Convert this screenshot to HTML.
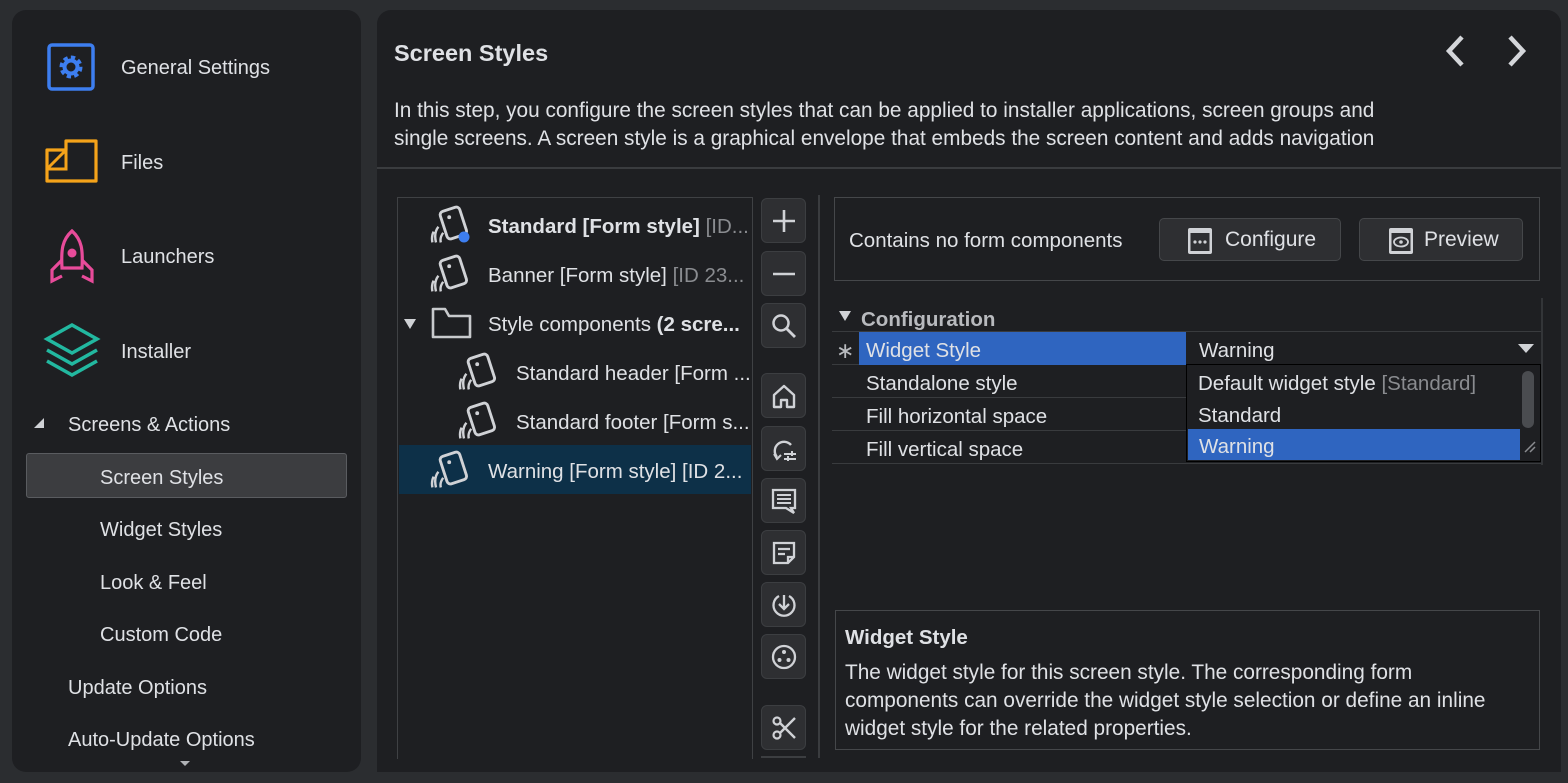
<!DOCTYPE html>
<html><head><meta charset="utf-8"><style>
*{box-sizing:border-box;margin:0;padding:0}
body{width:1568px;height:783px;background:#2b2d30;font-family:"Liberation Sans",sans-serif;color:#dfe1e5;position:relative;overflow:hidden}
.a{position:absolute;white-space:nowrap}
.side{left:12px;top:10px;width:349px;height:762px;background:#1e1f22;border-radius:14px}
.main{left:377px;top:10px;width:1184px;height:762px;background:#1e1f22;border-radius:14px 14px 0 0}
.t20{font-size:20px}
.t19{font-size:20.5px}
.btn{position:absolute;left:761px;width:45px;height:45px;background:#2e2f32;border:1px solid #3c3e41;border-radius:6px}
.btn svg{position:absolute;left:7px;top:7px}
.row{position:absolute;left:832px;width:709px;height:33px;border-bottom:1px solid #393b3e}
.gray{color:#8a8c90}
</style></head><body>
<div class="a side"></div>
<div class="a main"></div>

<svg class="a" style="left:46px;top:42px" width="50" height="50" viewBox="0 0 50 50"><rect x="3" y="3" width="44" height="44" rx="3" fill="none" stroke="#3d7ef0" stroke-width="3.5"/><circle cx="25" cy="25" r="9" fill="none" stroke="#3d7ef0" stroke-width="5" stroke-dasharray="4 3"/><circle cx="25" cy="25" r="6.5" fill="none" stroke="#3d7ef0" stroke-width="4"/></svg>
<div class="a t20" style="left:121px;top:57px">General Settings</div>
<svg class="a" style="left:44px;top:138px" width="56" height="46" viewBox="0 0 56 46"><path d="M3 12 H22 V3 H52 V43 H3 Z" fill="none" stroke="#f5a31a" stroke-width="3.2" stroke-linejoin="round"/><path d="M3 31 H22 V12 M4 30 L21 13" fill="none" stroke="#f5a31a" stroke-width="3"/></svg>
<div class="a t20" style="left:121px;top:152px">Files</div>
<svg class="a" style="left:48px;top:228px" width="48" height="56" viewBox="0 0 48 56"><path d="M24 3 C14 12 13 22 14 40 H34 C35 22 34 12 24 3Z" fill="none" stroke="#e84b9a" stroke-width="3.2"/><circle cx="24" cy="25" r="4.5" fill="#e84b9a"/><path d="M14 32 L4 42 V53 L14 48 M34 32 L44 42 V53 L34 48" fill="none" stroke="#e84b9a" stroke-width="3.2"/></svg>
<div class="a t20" style="left:121px;top:246px">Launchers</div>
<svg class="a" style="left:42px;top:322px" width="60" height="56" viewBox="0 0 60 56"><path d="M30 3 L55 17 L30 31 L5 17 Z" fill="none" stroke="#22b8a0" stroke-width="3.5"/><path d="M5 28 L30 42 L55 28 M5 39 L30 53 L55 39" fill="none" stroke="#22b8a0" stroke-width="3.5"/></svg>
<div class="a t20" style="left:121px;top:341px">Installer</div>
<svg class="a" style="left:33px;top:417px" width="12" height="12"><path d="M11 1 V11 H1 Z" fill="#d0d2d6"/></svg>
<div class="a t20" style="left:68px;top:414px">Screens &amp; Actions</div>
<div class="a" style="left:26px;top:453px;width:321px;height:45px;background:#3c3d40;border:1.5px solid #5a5c60;border-radius:3px"></div>
<div class="a t20" style="left:100px;top:467px">Screen Styles</div>
<div class="a t20" style="left:100px;top:519px">Widget Styles</div>
<div class="a t20" style="left:100px;top:572px">Look &amp; Feel</div>
<div class="a t20" style="left:100px;top:624px">Custom Code</div>
<div class="a t20" style="left:68px;top:677px">Update Options</div>
<div class="a t20" style="left:68px;top:729px">Auto-Update Options</div>
<svg class="a" style="left:179px;top:760px" width="12" height="8"><path d="M1 1 H11 L6 6Z" fill="#b0b2b6"/></svg>

<div class="a" style="left:394px;top:40px;font-size:23.5px;font-weight:bold">Screen Styles</div>
<svg class="a" style="left:1430px;top:32px" width="110" height="38"><path d="M32 5 L19 19 L32 33" fill="none" stroke="#d4d6da" stroke-width="4.5"/><path d="M80 5 L93 19 L80 33" fill="none" stroke="#d4d6da" stroke-width="4.5"/></svg>
<div class="a" style="left:394px;top:97px;line-height:28px;font-size:20.8px">In this step, you configure the screen styles that can be applied to installer applications, screen groups and<br>single screens. A screen style is a graphical envelope that embeds the screen content and adds navigation</div>
<div class="a" style="left:377px;top:167px;width:1184px;height:2px;background:#3a3c3f"></div>

<div class="a" style="left:397px;top:197px;width:356px;height:562px;border:1.5px solid #3f4144;border-bottom:none"></div>
<div class="a" style="left:399px;top:445px;width:352px;height:49px;background:#0d3048"></div>
<svg width="0" height="0" style="position:absolute"><defs><g id="ci" transform="scale(1.2)"><rect x="11" y="4" width="17" height="24" rx="3" transform="rotate(-18 19 16)" fill="none" stroke="#d0d2d6" stroke-width="2.4"/><circle cx="16" cy="11" r="1.6" fill="#d0d2d6"/><path d="M7 19 Q3 24 5 32 M3 23 Q1 27 2 32 M11 24 Q8 28 9 32" fill="none" stroke="#d0d2d6" stroke-width="2"/></g></defs></svg>
<svg class="a" style="left:430px;top:204px" width="46" height="42"><use href="#ci"/><circle cx="34" cy="33" r="5.5" fill="#3d7ef0"/></svg>
<div class="a t19" style="left:488px;top:215px"><b>Standard [Form style]</b> <span class="gray">[ID...</span></div>
<svg class="a" style="left:430px;top:253px" width="46" height="42"><use href="#ci"/></svg>
<div class="a t19" style="left:488px;top:264px">Banner [Form style] <span class="gray">[ID 23...</span></div>
<svg class="a" style="left:403px;top:318px" width="14" height="12"><path d="M1 1 H13 L7 11Z" fill="#d0d2d6"/></svg>
<svg class="a" style="left:431px;top:306px" width="42" height="34"><path d="M2 6 V31 H39 V10 H18 L14 3 H2 Z" fill="none" stroke="#c8cacd" stroke-width="2.6" stroke-linejoin="round"/></svg>
<div class="a t19" style="left:488px;top:313px">Style components <b>(2 scre...</b></div>
<svg class="a" style="left:458px;top:351px" width="46" height="42"><use href="#ci"/></svg>
<div class="a t19" style="left:516px;top:362px">Standard header [Form ...</div>
<svg class="a" style="left:458px;top:400px" width="46" height="42"><use href="#ci"/></svg>
<div class="a t19" style="left:516px;top:411px">Standard footer [Form s...</div>
<svg class="a" style="left:430px;top:449px" width="46" height="42"><use href="#ci"/></svg>
<div class="a t19" style="left:488px;top:460px">Warning [Form style] [ID 2...</div>

<div class="btn" style="top:198px"><svg width="30" height="30"><path d="M15 4 V26 M4 15 H26" stroke="#d0d2d6" stroke-width="2.6"/></svg></div>
<div class="btn" style="top:251px"><svg width="30" height="30"><path d="M4 15 H26" stroke="#d0d2d6" stroke-width="2.6"/></svg></div>
<div class="btn" style="top:303px"><svg width="30" height="30"><circle cx="12" cy="12" r="7.5" fill="none" stroke="#d0d2d6" stroke-width="2.5"/><path d="M17.5 17.5 L26 26" stroke="#d0d2d6" stroke-width="2.8"/></svg></div>
<div class="btn" style="top:373px"><svg width="30" height="30"><path d="M5 14 L15 5 L25 14 V26 H18 V19 H12 V26 H5 Z" fill="none" stroke="#d0d2d6" stroke-width="2.4" stroke-linejoin="round"/></svg></div>
<div class="btn" style="top:426px"><svg width="30" height="30"><path d="M22 11 A9 9 0 1 0 8 23" fill="none" stroke="#d0d2d6" stroke-width="2.4"/><path d="M5 20 L8 25 L12 21" fill="none" stroke="#d0d2d6" stroke-width="2"/><path d="M15 20 H27 M15 25 H27 M23 17 V22 M19 22 V27" stroke="#d0d2d6" stroke-width="2"/></svg></div>
<div class="btn" style="top:478px"><svg width="30" height="30"><path d="M4 4 H26 V22 H22 L25 27 L17 22 H4 Z" fill="none" stroke="#d0d2d6" stroke-width="2.3"/><path d="M8 9 H22 M8 13 H22 M8 17 H22" stroke="#d0d2d6" stroke-width="2"/></svg></div>
<div class="btn" style="top:530px"><svg width="30" height="30"><path d="M5 5 H25 V19 L19 25 H5 Z M19 25 V19 H25" fill="none" stroke="#d0d2d6" stroke-width="2.3"/><path d="M9 11 H21 M9 16 H16" stroke="#d0d2d6" stroke-width="2.2"/></svg></div>
<div class="btn" style="top:582px"><svg width="30" height="30"><path d="M10 6 A10.5 10.5 0 1 0 20 6" fill="none" stroke="#d0d2d6" stroke-width="2.3"/><path d="M15 5 V19 M10 14 L15 19 L20 14" fill="none" stroke="#d0d2d6" stroke-width="2.3"/></svg></div>
<div class="btn" style="top:634px"><svg width="30" height="30"><circle cx="15" cy="15" r="11" fill="none" stroke="#d0d2d6" stroke-width="2.3"/><circle cx="15" cy="10" r="2" fill="#d0d2d6"/><circle cx="10.5" cy="18" r="2" fill="#d0d2d6"/><circle cx="19.5" cy="18" r="2" fill="#d0d2d6"/></svg></div>
<div class="btn" style="top:705px"><svg width="30" height="30"><circle cx="8" cy="8" r="3.5" fill="none" stroke="#d0d2d6" stroke-width="2.2"/><circle cx="8" cy="22" r="3.5" fill="none" stroke="#d0d2d6" stroke-width="2.2"/><path d="M11 10 L26 25 M11 20 L26 5" stroke="#d0d2d6" stroke-width="2.4"/></svg></div>
<div class="a" style="left:761px;top:756px;width:45px;height:2px;background:#3c3e41"></div>
<div class="a" style="left:818px;top:195px;width:1.5px;height:563px;background:#3a3c3f"></div>

<div class="a" style="left:834px;top:197px;width:706px;height:84px;border:1.5px solid #45474a"></div>
<div class="a t19" style="left:849px;top:229px">Contains no form components</div>
<div class="a" style="left:1159px;top:218px;width:182px;height:43px;background:#2e2f32;border:1px solid #45474a;border-radius:5px"></div>
<svg class="a" style="left:1186px;top:226px" width="30" height="30"><rect x="2" y="2" width="24" height="26" rx="2" fill="#d0d2d6"/><rect x="4.5" y="7" width="19" height="18" fill="#2e2f32"/><circle cx="9" cy="16" r="1.6" fill="#d0d2d6"/><circle cx="14" cy="16" r="1.6" fill="#d0d2d6"/><circle cx="19" cy="16" r="1.6" fill="#d0d2d6"/></svg>
<div class="a" style="left:1225px;top:228px;font-size:21px">Configure</div>
<div class="a" style="left:1359px;top:218px;width:164px;height:43px;background:#2e2f32;border:1px solid #45474a;border-radius:5px"></div>
<svg class="a" style="left:1387px;top:226px" width="30" height="30"><rect x="2" y="2" width="24" height="26" rx="2" fill="#d0d2d6"/><rect x="4.5" y="7" width="19" height="18" fill="#2e2f32"/><ellipse cx="14" cy="16" rx="7" ry="4.5" fill="none" stroke="#d0d2d6" stroke-width="1.8"/><circle cx="14" cy="16" r="1.8" fill="#d0d2d6"/></svg>
<div class="a" style="left:1424px;top:228px;font-size:21px">Preview</div>

<div class="a" style="left:1541px;top:298px;width:1.5px;height:167px;background:#333538"></div>
<svg class="a" style="left:838px;top:310px" width="14" height="12"><path d="M1 1 H13 L7 11Z" fill="#d0d2d6"/></svg>
<div class="a t19" style="left:861px;top:308px;font-weight:bold;color:#b8babe">Configuration</div>
<div class="a" style="left:832px;top:331px;width:709px;height:1px;background:#393b3e"></div>
<div class="row" style="top:332px"></div>
<div class="a" style="left:859px;top:332px;width:327px;height:33px;background:#2f65c0"></div>
<div class="a" style="left:836px;top:338px;font-size:22px;color:#b8babe">∗</div>
<div class="a t19" style="left:866px;top:339px">Widget Style</div>
<div class="a t19" style="left:1199px;top:339px">Warning</div>
<svg class="a" style="left:1517px;top:343px" width="18" height="12"><path d="M1 1 H17 L9 10Z" fill="#d0d2d6"/></svg>
<div class="row" style="top:365px"></div>
<div class="a t19" style="left:866px;top:372px">Standalone style</div>
<div class="row" style="top:398px"></div>
<div class="a t19" style="left:866px;top:405px">Fill horizontal space</div>
<div class="row" style="top:431px"></div>
<div class="a t19" style="left:866px;top:438px">Fill vertical space</div>

<div class="a" style="left:1186px;top:364px;width:355px;height:98px;background:#1e1f22;border:1.5px solid #000"></div>
<div class="a t19" style="left:1198px;top:372px">Default widget style <span class="gray">[Standard]</span></div>
<div class="a t19" style="left:1198px;top:404px">Standard</div>
<div class="a" style="left:1188px;top:429px;width:332px;height:31px;background:#2f65c0"></div>
<div class="a t19" style="left:1199px;top:435px">Warning</div>
<div class="a" style="left:1522px;top:371px;width:12px;height:57px;background:#4a4c50;border-radius:6px"></div>
<svg class="a" style="left:1523px;top:440px" width="14" height="14"><path d="M2 12 L12 2 M7 12 L12 7" stroke="#8a8c90" stroke-width="1.5"/></svg>

<div class="a" style="left:835px;top:610px;width:705px;height:140px;border:1.5px solid #45474a"></div>
<div class="a t19" style="left:845px;top:626px;font-weight:bold">Widget Style</div>
<div class="a" style="left:845px;top:659px;line-height:28px;font-size:20.8px">The widget style for this screen style. The corresponding form<br>components can override the widget style selection or define an inline<br>widget style for the related properties.</div>
</body></html>
